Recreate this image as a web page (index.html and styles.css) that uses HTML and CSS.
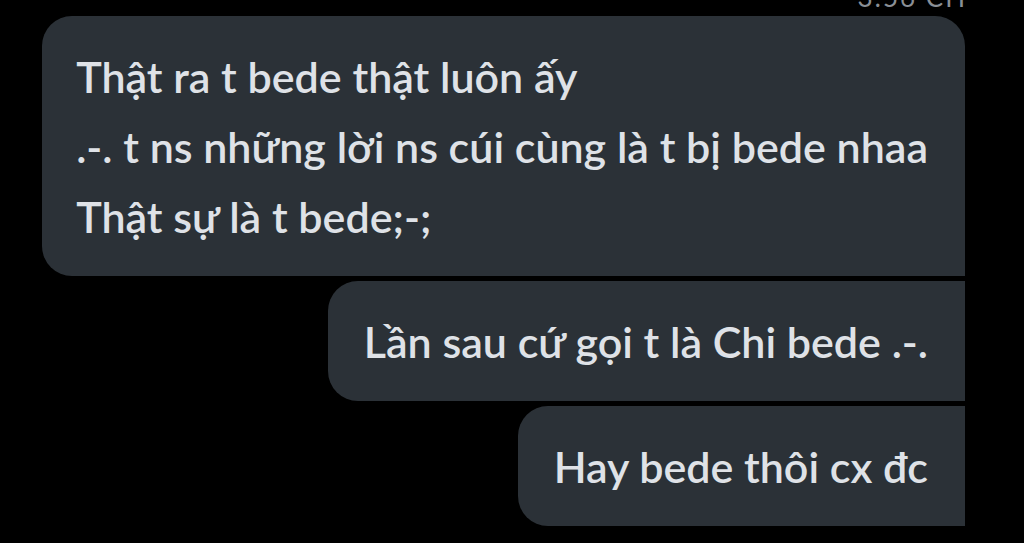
FILE: index.html
```html
<!DOCTYPE html>
<html lang="vi">
<head>
<meta charset="utf-8">
<title>Chat</title>
<link rel="stylesheet" href="styles.css">
</head>
<body>
<div class="chat">
  <div class="time">3:56 CH</div>
  <div class="thread">
    <div class="bubble first">Thật ra t bede thật luôn ấy<br>.-. t ns những lời ns cúi cùng là t bị bede nhaa<br>Thật sự là t bede;-;</div>
    <div class="bubble">Lần sau cứ gọi t là Chi bede .-.</div>
    <div class="bubble">Hay bede thôi cx đc</div>
  </div>
</div>
</body>
</html>
```
FILE: styles.css
```css
html, body {
  margin: 0;
  padding: 0;
  background: #000;
  height: 100%;
  overflow: hidden;
}
.chat {
  position: relative;
  padding: 16px 59px 0 38px;
  font-family: Lato, "Noto Sans", sans-serif;
}
.time {
  position: absolute;
  top: -19px;
  right: 57px;
  font-size: 26px;
  letter-spacing: 2px;
  color: #8a8f96;
}
.thread {
  display: flex;
  flex-direction: column;
  align-items: flex-end;
  gap: 5px;
}
.bubble {
  background: #2b3137;
  color: #dfe2e7;
  font-size: 43px;
  font-weight: 600;
  line-height: 70px;
  padding: 26px 37px 24px 36px;
  border-radius: 30px 0 0 30px;
}
.bubble.first {
  padding-left: 34px;
  border-radius: 30px 30px 0 30px;
}
```
